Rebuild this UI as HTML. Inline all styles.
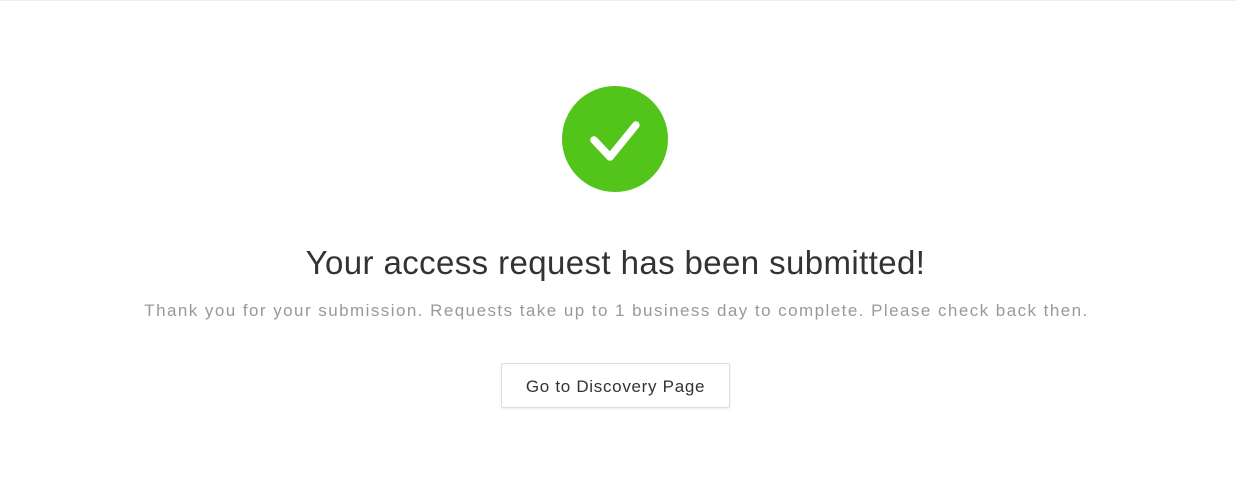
<!DOCTYPE html>
<html><head><style>
body{margin:0;width:1237px;height:477px;background:#fff;font-family:"Liberation Sans",sans-serif;position:relative;overflow:hidden;border-top:1px solid #eee;box-sizing:border-box}
.c{position:absolute;left:0;width:1237px;text-align:center}
h1{margin:0;font-weight:normal;font-size:33px;color:#333;letter-spacing:0.4px}
p{margin:0;font-size:17px;color:#999;letter-spacing:1.45px}
.btn{position:absolute;left:501px;top:362px;width:227px;height:43px;border:1px solid #ddd;border-radius:2px;box-shadow:0 1px 2px rgba(0,0,0,.08);font-size:17px;color:#333;text-align:center;line-height:45px;letter-spacing:0.7px}
</style></head><body>
<svg style="position:absolute;left:561px;top:84px" width="108" height="108" viewBox="0 0 108 108">
<circle cx="54" cy="54" r="53" fill="#52c41a"/>
<path d="M33 55 L49 72 L75 40" fill="none" stroke="#fff" stroke-width="7.5" stroke-linecap="round" stroke-linejoin="round"/>
</svg>
<div class="c" style="top:243px;left:-3px"><h1>Your access request has been submitted!</h1></div>
<div class="c" style="top:300px;left:-2px"><p>Thank you for your submission. Requests take up to 1 business day to complete. Please check back then.</p></div>
<div class="btn">Go to Discovery Page</div>
</body></html>
